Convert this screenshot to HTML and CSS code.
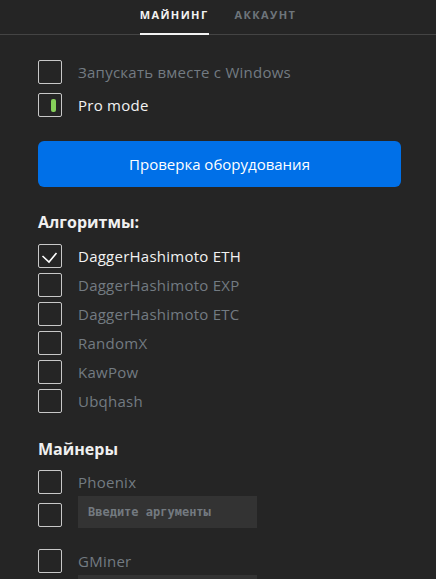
FILE: index.html
```html
<!DOCTYPE html>
<html lang="ru">
<head>
    <meta charset="UTF-8">
    <meta name="viewport" content="width=device-width, initial-scale=1.0">
    <title>Настройки</title>
    <link rel="stylesheet" href="styles.css">
</head>
<body>
    <div class="tabs">
        <div class="tab active">Майнинг</div>
        <div class="tab">Аккаунт</div>
    </div>
    <div class="content">
        <!-- Общие настройки -->
        <div class="check-row">
            <span class="box"></span>
            <span class="label">Запускать вместе с Windows</span>
        </div>
        <div class="check-row">
            <span class="box"><span class="pill"></span></span>
            <span class="label on">Pro mode</span>
        </div>
        <button class="blue-button">Проверка оборудования</button>

        <!-- Алгоритмы -->
        <h2 class="title">Алгоритмы:</h2>
        <div class="algo-list">
            <div class="check-row">
                <span class="box"><svg width="22" height="22" viewBox="0 0 22 22"><polyline points="3.5,11 10,17 17.5,8" fill="none" stroke="#fff" stroke-width="1.6"/></svg></span>
                <span class="label on">DaggerHashimoto ETH</span>
            </div>
            <div class="check-row">
                <span class="box"></span>
                <span class="label">DaggerHashimoto EXP</span>
            </div>
            <div class="check-row">
                <span class="box"></span>
                <span class="label">DaggerHashimoto ETC</span>
            </div>
            <div class="check-row">
                <span class="box"></span>
                <span class="label">RandomX</span>
            </div>
            <div class="check-row">
                <span class="box"></span>
                <span class="label">KawPow</span>
            </div>
            <div class="check-row">
                <span class="box"></span>
                <span class="label">Ubqhash</span>
            </div>
        </div>

        <!-- Майнеры -->
        <h2 class="title miners-title">Майнеры</h2>
        <div class="miner">
            <div class="check-row">
                <span class="box"></span>
                <span class="label">Phoenix</span>
            </div>
            <div class="check-row">
                <span class="box"></span>
                <input class="args" type="text" placeholder="Введите аргументы">
            </div>
        </div>
        <div class="miner">
            <div class="check-row">
                <span class="box"></span>
                <span class="label">GMiner</span>
            </div>
            <div class="check-row">
                <span class="box"></span>
                <input class="args" type="text" placeholder="Введите аргументы">
            </div>
        </div>
    </div>
</body>
</html>
```

FILE: styles.css
```css
body {
    font-family: "Open Sans", sans-serif;
    margin: 0;
    padding: 0;
    background-color: #252525;
    color: #f0f0f0;
    overflow: hidden;
}
.tabs {
    display: flex;
    justify-content: center;
    gap: 26px;
    height: 34px;
    border-bottom: 1px solid #444;
}
.tab {
    font-size: 11px;
    font-weight: 700;
    letter-spacing: 1.4px;
    text-transform: uppercase;
    color: #6e757b;
    padding-top: 7px;
    height: 27px;
    box-sizing: border-box;
}
.tab.active {
    color: #f2f2f2;
    border-bottom: 2px solid #f2f2f2;
    height: 35px;
}
.content {
    padding: 25px 35px 0 38px;
}
.check-row {
    display: flex;
    align-items: center;
    gap: 16px;
    margin-bottom: 9px;
}
.box {
    width: 24px;
    height: 24px;
    box-sizing: border-box;
    border: 1px solid #c8c8c8;
    border-radius: 2px;
    flex-shrink: 0;
    display: flex;
    align-items: center;
    justify-content: flex-end;
}
.box svg {
    display: block;
}
.pill {
    width: 5px;
    height: 13px;
    border-radius: 2px;
    background-color: #86d05a;
    margin-right: 5px;
}
.label {
    font-size: 15px;
    font-weight: 500;
    letter-spacing: 0.25px;
    color: #737b82;
}
.label.on {
    color: #f2f2f2;
}
.blue-button {
    display: block;
    width: 100%;
    height: 46px;
    margin-top: 24px;
    border: none;
    border-radius: 6px;
    background-color: #0070e8;
    color: white;
    font-family: inherit;
    font-size: 15px;
    font-weight: 500;
    cursor: pointer;
}
.title {
    font-size: 16px;
    font-weight: 700;
    margin: 24px 0 11px;
}
.algo-list .check-row {
    margin-bottom: 5px;
}
.miners-title {
    margin-top: 25px;
    margin-bottom: 10px;
}
.miner {
    margin-bottom: 22px;
}
.args {
    width: 179px;
    height: 32px;
    box-sizing: border-box;
    margin: -7px 0 -1px;
    border: none;
    background-color: #333;
    padding: 0 10px;
    font-family: "DejaVu Sans Mono", monospace;
    font-weight: 700;
    font-size: 12px;
    color: #ddd;
}
.args::placeholder {
    color: #737a80;
}
```
